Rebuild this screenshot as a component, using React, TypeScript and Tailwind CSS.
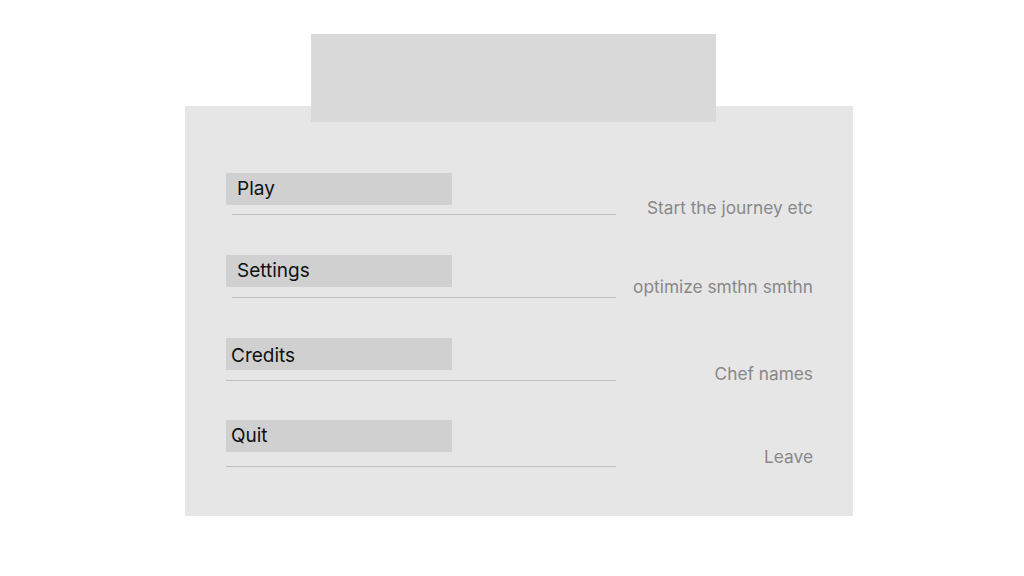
import React from "react";

const rows = [
  { label: "Play", desc: "Start the journey etc", textPad: "pl-[11px] pt-0", lineInset: "ml-[6px]", lineGap: "mt-[9px]", descTop: "pt-[25px]", h: "h-[42px]", mt: "mt-0" },
  { label: "Settings", desc: "optimize smthn smthn", textPad: "pl-[11px] pt-0", lineInset: "ml-[6px]", lineGap: "mt-[10px]", descTop: "pt-[22px]", h: "h-[43px]", mt: "mt-[40px]" },
  { label: "Credits", desc: "Chef names", textPad: "pl-[5px] pt-[5px]", lineInset: "ml-0", lineGap: "mt-[10px]", descTop: "pt-[26px]", h: "h-[43px]", mt: "mt-[40px]" },
  { label: "Quit", desc: "Leave", textPad: "pl-[5px] pt-0", lineInset: "ml-0", lineGap: "mt-[14px]", descTop: "pt-[27px]", h: "h-[47px]", mt: "mt-[39px]" },
];

export default function App() {
  return (
    <div
      className="w-[1024px] h-[576px] bg-white overflow-hidden pt-[34px] pl-[185px]"
      style={{ fontFamily: "Inter, 'Noto Sans', sans-serif" }}
    >
      <div className="relative z-10 ml-[126px] w-[405px] h-[88px] bg-[#d9d9d9]" />
      <div className="-mt-[16px] w-[668px] h-[410px] bg-[#e6e6e6] pt-[67px] pl-[41px] pr-[40px] flex flex-col">
        {rows.map((r) => (
          <div key={r.label} className={`flex items-start shrink-0 ${r.h} ${r.mt}`}>
            <div className="w-[390px] flex flex-col">
              <div className={`w-[226px] h-[32px] bg-[#d0d0d0] flex items-center ${r.textPad} text-[19px] text-[#111]`}>
                {r.label}
              </div>
              <div className={`${r.lineGap} ${r.lineInset} h-px bg-[#bdbdbd]`} />
            </div>
            <div className={`flex-1 text-right whitespace-nowrap ${r.descTop} text-[17.3px] leading-[20px] text-[#888888]`}>
              {r.desc}
            </div>
          </div>
        ))}
      </div>
    </div>
  );
}
